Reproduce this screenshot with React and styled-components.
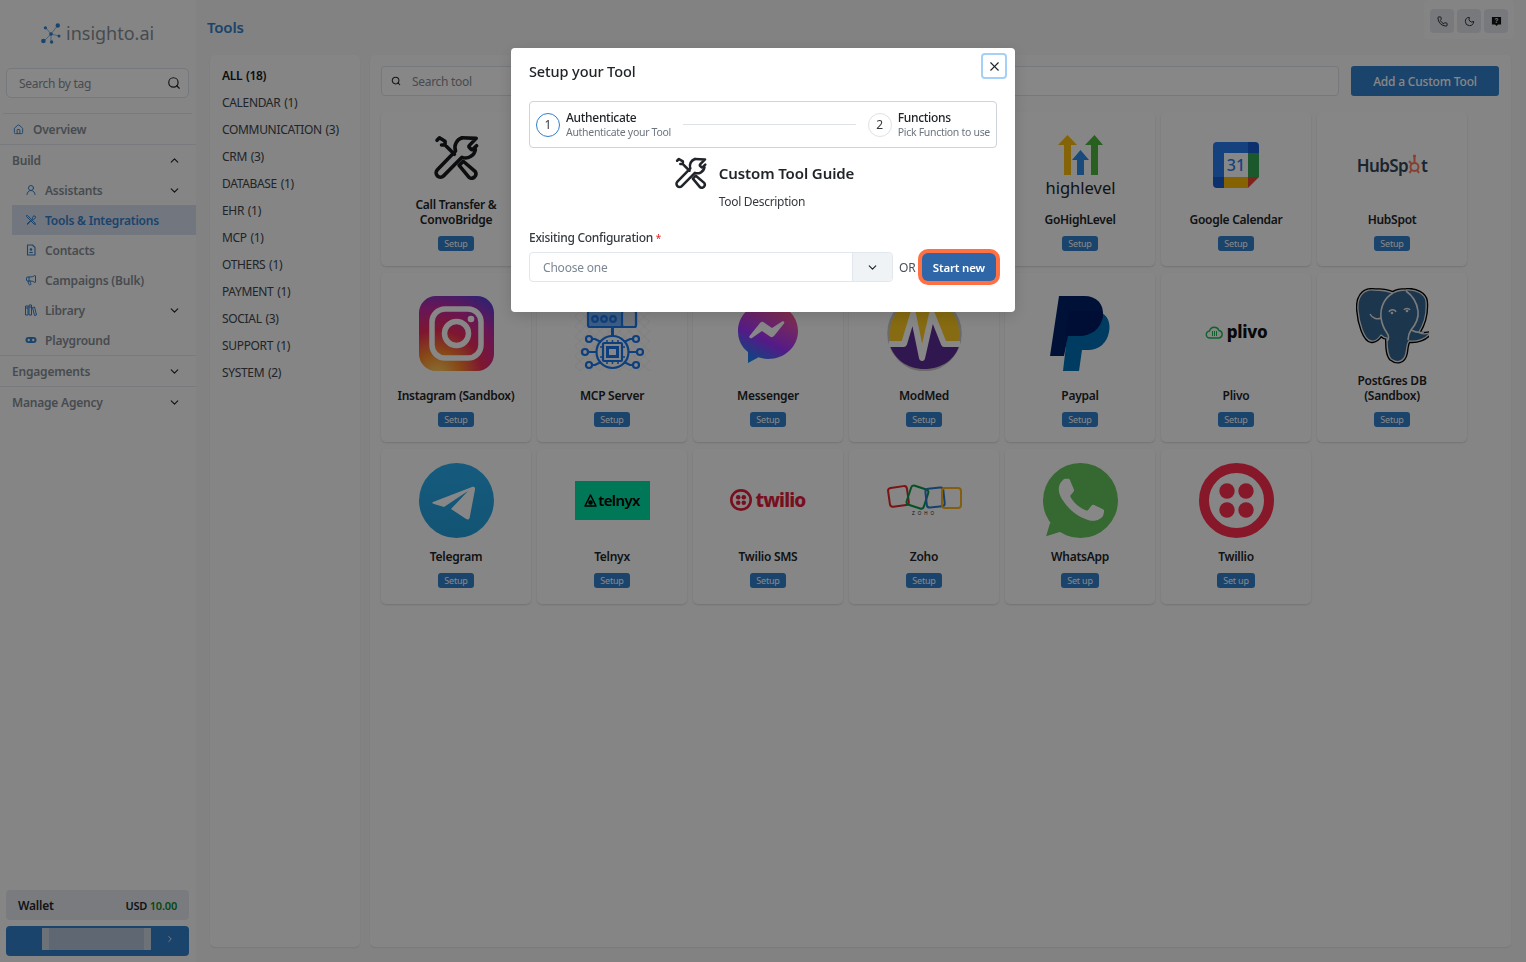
import React from "react"
import styled, { createGlobalStyle } from "styled-components"
import {
  ChevronDown,
  ChevronRight,
  ChevronUp,
  Home,
  Megaphone,
  Moon,
  Phone,
  Search,
  UserRound,
  X,
} from "lucide-react"

const FONT = `"Noto Sans", "Open Sans", sans-serif`
const BLUE = "#3380cc"

const GlobalStyle = createGlobalStyle`
  html, body {
    margin: 0;
    padding: 0;
    height: 100%;
    overflow: hidden;
    background: #f7f7f7;
    font-family: ${FONT};
  }
  * { box-sizing: border-box; }
`

const Page = styled.div`
  display: flex;
  height: 962px;
  width: 1526px;
  background: #f6f6f6;
`

// sidebar
const Sidebar = styled.aside`
  width: 196px;
  flex-shrink: 0;
  display: flex;
  flex-direction: column;
  background: #fcfcfc;
`
const LogoRow = styled.div`
  height: 68px;
  display: flex;
  align-items: center;
  gap: 4px;
  padding: 0 0 2px 41px;
`
const LogoText = styled.span`
  font-size: 18px;
  color: #868e96;
`
const TagSearch = styled.div`
  margin: 0 7px 15px 6px;
  height: 30px;
  border: 1px solid #dee2ed;
  border-radius: 5px;
  display: flex;
  align-items: center;
  justify-content: space-between;
  padding: 0 7px 0 12px;
  font-size: 12px;
  letter-spacing: -0.3px;
  color: #868e96;
  background: #fff;
  svg { color: #212529; }
`
const Rule = styled.div`
  height: 1px;
  background: #e3e7ef;
  margin: ${(p) => (p.$inset ? "0 4px 0 3px" : "0")};
`
const NavRow = styled.div`
  height: 30px;
  display: flex;
  align-items: center;
  gap: ${(p) => (p.$sub ? 8 : 9)}px;
  margin-left: ${(p) => (p.$sub ? 12 : 0)}px;
  padding: 0 15px 0 ${(p) => (p.$sub ? 13 : p.$icon ? 13 : 12)}px;
  font-size: 12px;
  font-weight: 600;
  letter-spacing: -0.2px;
  color: ${(p) => (p.$active ? BLUE : "#868e96")};
  background: ${(p) => (p.$active ? "#d5dff0" : "transparent")};
  svg.nav { color: ${BLUE}; flex-shrink: 0; }
  svg.chev { color: #212529; margin-left: auto; flex-shrink: 0; }
`
const SidebarFoot = styled.div`
  margin-top: auto;
  padding: 0 7px 6px 6px;
  display: flex;
  flex-direction: column;
  gap: 6px;
`
const Wallet = styled.div`
  height: 30px;
  border-radius: 4px;
  background: #e7e9ef;
  display: flex;
  align-items: center;
  justify-content: space-between;
  padding: 0 12px;
  font-size: 12px;
  font-weight: 600;
  letter-spacing: -0.2px;
  color: #212529;
`
const WalletAmount = styled.span`
  font-size: 11px;
  color: #212529;
  b { font-weight: 600; color: #0d8a1f; }
`
const AccountBar = styled.div`
  height: 30px;
  border-radius: 4px;
  background: ${BLUE};
  display: flex;
  align-items: center;
  padding: 2px 14px 6px 36px;
  color: #fff;
  svg { margin-left: auto; }
`
const AccountMask = styled.div`
  width: 109px;
  height: 22px;
  background: linear-gradient(90deg, #cfd8e4 0 7px, #b4c5d8 7px 102px, #cfd8e4 102px);
`

// main area
const Main = styled.main`
  flex: 1;
  min-width: 0;
  display: flex;
  flex-direction: column;
  padding: 0 15px 15px 11px;
`
const TopBar = styled.div`
  height: 55px;
  display: flex;
  justify-content: space-between;
  align-items: flex-start;
`
const PageTitle = styled.h1`
  margin: 17px 0 0;
  font-size: 15px;
  line-height: 20px;
  font-weight: 600;
  letter-spacing: -0.2px;
  color: ${BLUE};
`
const TopActions = styled.div`
  display: flex;
  gap: 3px;
  padding: 9px 6px 6px;
  margin: 0 -3px 0 0;
  border-radius: 4px;
  background: #f9f9f9;
  height: 39px;
`
const TopButton = styled.div`
  width: 24px;
  height: 24px;
  border-radius: 4px;
  background: #e3e5ea;
  display: flex;
  align-items: center;
  justify-content: center;
  color: #212529;
`
const Columns = styled.div`
  flex: 1;
  display: flex;
  gap: 10px;
  padding-left: 3px;
`
const Panel = styled.section`
  background: #fbfbfb;
  border-radius: 5px;
  box-shadow: 0 1px 2px rgba(0, 0, 0, 0.08);
`
const CategoryPanel = styled(Panel)`
  width: 150px;
  flex-shrink: 0;
  padding: 7px 0 0 12px;
`
const Category = styled.div`
  height: 27px;
  display: flex;
  align-items: center;
  font-size: 12px;
  letter-spacing: -0.33px;
  word-spacing: 1px;
  white-space: nowrap;
  font-weight: ${(p) => (p.$active ? 600 : 400)};
  color: ${(p) => (p.$active ? "#16191c" : "#40454b")};
`
const ToolPanel = styled(Panel)`
  flex: 1;
  min-width: 0;
  padding: 11px 12px 0 11px;
`
const SearchRow = styled.div`
  display: flex;
  gap: 12px;
  margin-bottom: 16px;
`
const ToolSearch = styled.div`
  flex: 1;
  height: 30px;
  background: #fff;
  border: 1px solid #dee2ed;
  border-radius: 4px;
  display: flex;
  align-items: center;
  gap: 11px;
  padding-left: 9px;
  font-size: 12px;
  letter-spacing: -0.3px;
  color: #868e96;
  svg { color: #212529; }
`
const AddButton = styled.button`
  width: 148px;
  height: 30px;
  border: 0;
  border-radius: 3px;
  background: ${BLUE};
  color: #fff;
  font: 500 12px ${FONT};
  letter-spacing: -0.2px;
`
const ToolGrid = styled.div`
  display: grid;
  grid-template-columns: repeat(7, 150px);
  grid-template-rows: 154px 169px 155px;
  column-gap: 6px;
  row-gap: 7px;
`
const Card = styled.article`
  display: flex;
  flex-direction: column;
  align-items: center;
  padding: 0 14px ${(p) => p.$bottom || 15}px;
  background: #fdfdfd;
  border-radius: 5px;
  box-shadow: 0 1px 2px rgba(0, 0, 0, 0.14);
`
const LogoBox = styled.div`
  flex: 1;
  display: flex;
  align-items: center;
  justify-content: center;
  padding-top: ${(p) => p.$top || 0}px;
  min-height: 0;
`
const ToolName = styled.div`
  margin-top: 3px;
  font-size: 12px;
  line-height: 15px;
  font-weight: 600;
  letter-spacing: -0.27px;
  text-align: center;
  color: #212529;
`
const SetupPill = styled.div`
  margin-top: 9px;
  height: 15px;
  padding: 0 6px;
  border-radius: 3px;
  background: ${BLUE};
  color: #fff;
  font-size: 9px;
  line-height: 15px;
  letter-spacing: -0.2px;
`

// word marks inside the logos
const WordMark = styled.span`
  display: inline-flex;
  align-items: center;
  gap: ${(p) => p.$gap || 0}px;
  font-size: ${(p) => p.$size}px;
  font-weight: ${(p) => p.$weight || 700};
  letter-spacing: ${(p) => p.$track || 0}px;
  color: ${(p) => p.$color};
  line-height: 1;
`
const TelnyxBadge = styled.div`
  width: 75px;
  height: 39px;
  background: #00e2a4;
  display: flex;
  align-items: center;
  justify-content: center;
`

// modal
const Overlay = styled.div`
  position: fixed;
  inset: 0;
  background: rgba(0, 0, 0, 0.47);
`
const Modal = styled.div`
  position: fixed;
  left: 511px;
  top: 48px;
  width: 504px;
  height: 264px;
  background: #fff;
  border-radius: 4px;
  padding: 0 18px;
  box-shadow: 0 4px 16px rgba(0, 0, 0, 0.15);
  display: flex;
  flex-direction: column;
`
const ModalHead = styled.div`
  height: 53px;
  display: flex;
  justify-content: space-between;
  align-items: flex-start;
`
const ModalTitle = styled.h2`
  margin: 13px 0 0;
  font-size: 14.5px;
  line-height: 20px;
  font-weight: 500;
  letter-spacing: -0.1px;
  color: #212529;
`
const CloseButton = styled.button`
  margin: 5px -10px 0 0;
  width: 26px;
  height: 26px;
  padding: 0;
  background: #fff;
  border: 2px solid #a5d0f8;
  border-radius: 4px;
  display: flex;
  align-items: center;
  justify-content: center;
  color: #212529;
`
const Stepper = styled.div`
  height: 47px;
  border: 1px solid #ced4da;
  border-radius: 4px;
  display: flex;
  align-items: center;
  padding: 0 6px;
`
const StepCircle = styled.div`
  width: 24px;
  height: 24px;
  border-radius: 50%;
  border: 1px solid ${(p) => (p.$current ? "#2f80d0" : "#dee2e6")};
  display: flex;
  align-items: center;
  justify-content: center;
  font-size: 12px;
  color: #343a40;
  flex-shrink: 0;
`
const StepText = styled.div`
  margin-left: 6px;
  padding-top: 1px;
  white-space: nowrap;
`
const StepTitle = styled.div`
  font-size: 12px;
  line-height: 15px;
  font-weight: 500;
  letter-spacing: -0.3px;
  color: #212529;
`
const StepHint = styled.div`
  font-size: 10.5px;
  line-height: 15px;
  letter-spacing: -0.3px;
  color: #6c757d;
`
const StepLine = styled.div`
  flex: 1;
  height: 1px;
  margin: 0 12px;
  background: #dee2e6;
`
const Guide = styled.div`
  display: grid;
  grid-template-columns: 32px auto;
  column-gap: 12px;
  justify-content: center;
  align-items: center;
  margin: 9px 0 0 3px;
`
const GuideTitle = styled.div`
  font-size: 15px;
  font-weight: 600;
  letter-spacing: -0.1px;
  color: #212529;
`
const GuideText = styled.div`
  grid-column: 2;
  margin-top: 3px;
  font-size: 12px;
  line-height: 20px;
  letter-spacing: -0.3px;
  color: #343a40;
`
const FieldLabel = styled.div`
  margin-top: 17px;
  font-size: 12px;
  line-height: 18px;
  font-weight: 500;
  letter-spacing: -0.3px;
  color: #343a40;
  span { font-size: 10px; color: #e03131; }
`
const FieldRow = styled.div`
  margin-top: 5px;
  display: flex;
  align-items: center;
`
const SelectBox = styled.div`
  width: 364px;
  height: 30px;
  border: 1px solid #e2e6ee;
  border-radius: 4px;
  display: flex;
  align-items: center;
  overflow: hidden;
  font-size: 12px;
  letter-spacing: -0.2px;
  color: #7b8794;
`
const SelectValue = styled.div`
  flex: 1;
  padding-left: 13px;
`
const SelectArrow = styled.div`
  width: 40px;
  height: 100%;
  background: #f0f3f6;
  border-left: 1px solid #e2e6ee;
  display: flex;
  align-items: center;
  justify-content: center;
  color: #212529;
`
const OrText = styled.span`
  margin-left: 6px;
  font-size: 12px;
  color: #495057;
`
const StartButton = styled.button`
  margin-left: 6px;
  width: 74px;
  height: 28px;
  border: 0;
  border-radius: 6px;
  background: #2f66a8;
  box-shadow: 0 0 0 4px #ff7043;
  color: #fff;
  font: 600 11.5px ${FONT};
  letter-spacing: -0.2px;
`

// drawings
const ToolsIcon = ({ size = 44, color = "#16191c", width = 1.9 }) => (
  <svg width={size} height={size} viewBox="0 0 24 24" fill="none" stroke={color} strokeWidth={width} strokeLinecap="round" strokeLinejoin="round">
    <path d="M15 1.500a5.400 5.400 0 0 0-3.500 7L1.800 18.500a2.300 2.300 0 0 0 3.300 3.300l9.800-9.900a5.400 5.400 0 0 0 7.200-4.200" />
    <path d="M15 1.500 22.500 1.800l-3.500 3.600a1 1 0 0 0 0 1.400l.6.6a1 1 0 0 0 1.400 0l1.700-1.700" />
    <path d="M1.600 2.800 2.900 1.500l3 1.800v2l5 5M5.900 5.300H4z" />
    <path d="M13.400 16.200l2.200-2.200 6.300 5.400a2.300 2.300 0 0 1-3.200 3.200z" />
  </svg>
)
const ContactDoc = () => (
  <svg className="nav" width="12" height="12" viewBox="0 0 24 24" fill="none" stroke="currentColor" strokeWidth="2.2">
    <path d="M5 2h10l5 5v15H5z" strokeLinejoin="round" />
    <circle cx="12" cy="11" r="1.600" fill="currentColor" />
    <path d="M8.500 17h7" />
  </svg>
)
const SmallTools = () => (
  <svg className="nav" width="12" height="12" viewBox="0 0 24 24" fill="none" stroke="currentColor" strokeWidth="2">
    <path d="M3 3h2l3 3 12 12 1 3-3-1L6 8 3 5zM20 4a4 4 0 0 0-5 5L4 20l1 1L15 10a4 4 0 0 0 5-6z" strokeLinejoin="round" />
  </svg>
)
const BookShelf = () => (
  <svg className="nav" width="12" height="12" viewBox="0 0 12 12" fill="none" stroke="currentColor" strokeWidth="1">
    <path d="M.500 2v9h2.500V2zM4 1v10h2.500V1zM7.500 3.500 9.500 3l2 8-2 .5z" />
    <path d="M.500 4h2.500M4 3h2.500" />
  </svg>
)
const PlayPill = () => (
  <svg className="nav" width="12" height="12" viewBox="0 0 24 24" fill="currentColor">
    <rect x="1" y="6" width="22" height="12" rx="6" />
    <circle cx="7.500" cy="12" r="2.400" fill="#fcfcfc" />
    <circle cx="16.500" cy="12" r="2.400" fill="#fcfcfc" />
  </svg>
)
const HelpIcon = () => (
  <svg width="11" height="11" viewBox="0 0 12 12">
    <path d="M1 1h10v8.400H7.600L6 11 4.400 9.400H1z" fill="#111" />
    <text x="6" y="7.600" fontSize="7" fontWeight="700" textAnchor="middle" fill="#e3e5ea" fontFamily="Liberation Sans">?</text>
  </svg>
)
const BrandMark = () => (
  <svg width="21" height="21" viewBox="0 0 21 21" fill={BLUE}>
    <g stroke={BLUE} strokeWidth="0.7" opacity="0.8">
      <path d="M5 5l5 6M17 2l-7 9M3 18l7-7M10 11l8 2M10 11l0 7" />
    </g>
    <circle cx="16.800" cy="2.500" r="2.200" />
    <circle cx="4.400" cy="4.800" r="1.600" />
    <circle cx="10" cy="11" r="1.800" />
    <circle cx="18" cy="13" r="1.500" />
    <circle cx="2.400" cy="18" r="2.300" />
    <circle cx="10.600" cy="19" r="1.700" />
  </svg>
)

const HighLevelLogo = () => (
  <svg width="75" height="70" viewBox="0 0 75 70">
    <path d="M15 15 24.500 5 34 15H28V45H21V15z" fill="#fbbc0e" />
    <path d="M42 15 51.500 5 60 15H55V45H48V15z" fill="#4cb83c" />
    <path d="M29 30 37.500 20 46 30H41V45H34V30z" fill="#2f8fe8" />
    <text x="37.500" y="64" fontSize="16.500" textAnchor="middle" fill="#212529" fontFamily="Noto Sans, sans-serif">highlevel</text>
  </svg>
)
const GoogleCalendarLogo = () => (
  <svg width="46" height="46" viewBox="0 0 46 46">
    <path d="M35 0H4a4 4 0 0 0-4 4v31h11V11h24z" fill="#2a7bf0" />
    <path d="M35 0h7a4 4 0 0 1 4 4v7H35z" fill="#1a5dd0" />
    <path d="M35 11h11v24H35z" fill="#34a853" />
    <path d="M35 35h11L35 46z" fill="#ea4335" />
    <path d="M11 35h24v11H11z" fill="#fbbc04" />
    <path d="M0 35h11v11H4a4 4 0 0 1-4-4z" fill="#1a5dd0" />
    <rect x="11" y="11" width="24" height="24" fill="#fff" />
    <text x="23" y="29" fontSize="16" fontWeight="500" textAnchor="middle" fill="#2a7bf0" fontFamily="Noto Sans, sans-serif">31</text>
  </svg>
)
const HubSpotLogo = () => (
  <WordMark $size={17} $weight={600} $color="#33475b" $track={-0.6}>
    HubSp
    <svg width="13" height="24" viewBox="0 0 13 24" fill="none" stroke="#ff7a59" strokeWidth="2">
      <circle cx="6.500" cy="14" r="4" />
      <path d="M6.500 10V4M3.500 11 1 8M9 17l2 3M3.500 17l-2 3" />
      <circle cx="6.500" cy="3" r="1.600" fill="#ff7a59" stroke="none" />
    </svg>
    t
  </WordMark>
)
const InstagramLogo = () => (
  <svg width="75" height="75" viewBox="0 0 75 75">
    <defs>
      <radialGradient id="ig" cx="0.25" cy="1.05" r="1.2">
        <stop offset="0" stopColor="#ffd666" />
        <stop offset="0.25" stopColor="#ff8a2a" />
        <stop offset="0.5" stopColor="#ee2a5c" />
        <stop offset="0.75" stopColor="#c32aa3" />
        <stop offset="1" stopColor="#5a3fd6" />
      </radialGradient>
    </defs>
    <rect width="75" height="75" rx="17" fill="url(#ig)" />
    <g fill="none" stroke="#fff" strokeWidth="5.500">
      <rect x="13" y="13" width="49" height="49" rx="13" />
      <circle cx="37.500" cy="37.500" r="12" />
    </g>
    <circle cx="52" cy="23" r="3.300" fill="#fff" />
  </svg>
)
const McpLogo = () => {
  const nodes = [[14, 43], [10, 56], [14, 69], [61, 43], [65, 56], [61, 69]]
  return (
    <svg width="75" height="75" viewBox="0 0 75 75" fill="none" stroke="#1a78f0" strokeWidth="2.200">
      <defs>
        <pattern id="hatch" width="7" height="7" patternUnits="userSpaceOnUse" patternTransform="rotate(45)">
          <path d="M0 0h7M0 0v7" stroke="#000" strokeOpacity="0.07" strokeWidth="1" />
        </pattern>
      </defs>
      <rect width="75" height="75" fill="url(#hatch)" stroke="none" />
      <rect x="13" y="15" width="48" height="16" rx="2" fill="#74b0f5" />
      <rect x="47" y="15" width="14" height="16" rx="2" fill="#d8dee6" />
      <circle cx="20" cy="23" r="2.800" />
      <circle cx="29" cy="23" r="2.800" />
      <circle cx="38" cy="23" r="2.800" />
      <path d="M37.500 31v9" strokeWidth="3" />
      <circle cx="37.500" cy="56" r="16" fill="#fdfdfd" />
      <rect x="28" y="47" width="19" height="18" rx="1" />
      <rect x="32.500" y="51.500" width="10" height="9" fill="#fff" strokeWidth="3" />
      <path d="M32 47v-3M37.500 47v-3M43 47v-3M32 65v3M37.500 65v3M43 65v3M28 51h-3M28 61h-3M47 51h3M47 61h3" strokeWidth="1.500" />
      <path d="M16 43h4l6 3M13 56h8M16 69h4l6-3M59 43h-4l-6 3M62 56h-8M59 69h-4l-6-3" />
      {nodes.map(([cx, cy]) => (
        <circle key={`${cx}-${cy}`} cx={cx} cy={cy} r="3" fill="#fdfdfd" />
      ))}
    </svg>
  )
}
const MessengerLogo = () => (
  <svg width="60" height="62" viewBox="0 0 60 62">
    <defs>
      <linearGradient id="msg" x1="0.2" y1="1" x2="0.7" y2="0">
        <stop offset="0" stopColor="#0a8cf0" />
        <stop offset="0.4" stopColor="#a033ff" />
        <stop offset="1" stopColor="#ff5c87" />
      </linearGradient>
    </defs>
    <path d="M30 1C13 1 0 13 0 29c0 9 3.600 16 10 21v11l10.500-5.800C23.500 56 26.500 57 30 57c17 0 30-12.500 30-28S47 1 30 1z" fill="url(#msg)" />
    <path d="M11.500 36 22 23c1.200-1.300 2.800-1.500 4-.5l8 5.500 10-6.500c1.500-1 3 .5 2 2L36 36c-1.200 1.300-2.800 1.500-4 .5L24 31l-10 7c-1.500 1-3.500-.5-2.500-2z" fill="#fff" transform="translate(0 -2)" />
  </svg>
)
const ModMedLogo = () => (
  <svg width="75" height="75" viewBox="0 0 75 75">
    <ellipse cx="37.500" cy="37.500" rx="36" ry="36.500" fill="#ffcb22" stroke="#c8c8c8" strokeWidth="2.500" />
    <path d="M2.500 48H17L25 24l9 38 10-40 12 26h16.500C69 63 55 73 37.500 73S7 63 2.500 48z" fill="#5e2d95" />
    <path d="M2 48h15L26 18l9 44 10-44 12 30h16" fill="none" stroke="#fff" strokeWidth="6" strokeLinejoin="round" />
  </svg>
)
const PaypalLogo = () => (
  <svg width="60" height="75" viewBox="0 0 60 75">
    <path d="M20 15h28c9 3 13 11 11 21-2 11-10 18-21 18h-6l-3 21H13z" fill="#0070ba" />
    <path d="M9 0h25c13 0 20 8 19 20-2 13-12 20-25 20H18l-4 20H0z" fill="#012169" />
    <path d="M19 15h31c3 1 3 2 3 5-2 13-12 20-25 20H15z" fill="#001c64" />
  </svg>
)
const PlivoLogo = () => (
  <WordMark $size={17} $weight={800} $color="#111" $gap={3} $track={-0.3}>
    <svg width="19" height="14" viewBox="0 0 19 14" fill="none" stroke="#1db954" strokeWidth="1.400">
      <path d="M5 13a3.500 3.500 0 0 1-.5-7A5 5 0 0 1 14 5.500a3.800 3.800 0 0 1 0 7.500z" />
      <path d="M7.500 6v5M9.500 6v5M11.500 6v5" strokeWidth="1" />
    </svg>
    plivo
  </WordMark>
)
const PG_OUTLINE = "M18 2C6 1 1 10 2 22c1 13 6 30 13 31 5 1 8-3 10-6 2 2 4 3 6 3 0 8 0 17 4 21 5 4 13 4 15-6 1-6 1-10 3-12 8 1 17-2 21-8-5 1-10 1-11-1 5-8 8-20 7-31C69 6 60 1 50 2c-6 0-10 1-13 3-5-2-12-3-19-3z"
const PostgresLogo = () => (
  <svg width="73" height="76" viewBox="0 0 73 76" fill="none">
    <path d={PG_OUTLINE} stroke="#000" strokeWidth="4" strokeLinejoin="round" />
    <path d={PG_OUTLINE} fill="#336791" stroke="#e8e8e8" strokeWidth="1.300" strokeLinejoin="round" />
    <path d="M37 5c-9 5-13 15-12 25 1 6 3 11 6 15 2 3 2 6 0 8M50 3c7 5 11 12 12 20 1 7-2 13-7 19-2 3-3 6-3 10" stroke="#e8e8e8" strokeWidth="1.600" />
    <path d="M25 30c-4 2-9 0-11-4M55 42c4 2 9 3 13 2M33 24c1-3 6-3 7 0M48 22c1-2 5-2 6 0" stroke="#e8e8e8" strokeWidth="1.400" />
    <circle cx="36" cy="25" r="1.300" fill="#e8e8e8" />
    <circle cx="51" cy="23" r="1.300" fill="#e8e8e8" />
  </svg>
)
const TelegramLogo = () => (
  <svg width="75" height="75" viewBox="0 0 75 75">
    <defs>
      <linearGradient id="tg" x1="0.5" y1="0" x2="0.5" y2="1">
        <stop offset="0" stopColor="#2aabee" />
        <stop offset="1" stopColor="#229ed9" />
      </linearGradient>
    </defs>
    <circle cx="37.500" cy="37.500" r="37.500" fill="url(#tg)" />
    <path d="M14 39 53 24c2-.8 3.500.4 3 2.500l-5.300 28c-.4 2-2 2.600-3.500 1.600L32 46l17-18-24 16-10-3c-2-.6-2-1.500-1-2z" fill="#fff" />
  </svg>
)
const TelnyxLogo = () => (
  <TelnyxBadge>
    <WordMark $size={15} $weight={600} $color="#000" $gap={1} $track={-0.6}>
      <svg width="13" height="13" viewBox="0 0 13 13" fill="none" stroke="#000" strokeWidth="1.500">
        <path d="M6.500 1 1 12h11z" strokeLinejoin="round" />
        <circle cx="6.500" cy="8.500" r="1.500" fill="#000" />
      </svg>
      telnyx
    </WordMark>
  </TelnyxBadge>
)
const TwilioDots = ({ size, color, ring }) => (
  <svg width={size} height={size} viewBox="0 0 75 75" fill={color}>
    <circle cx="37.500" cy="37.500" r={37.5 - ring / 2} fill="none" stroke={color} strokeWidth={ring} />
    <circle cx="28" cy="28" r="7.700" />
    <circle cx="47" cy="28" r="7.700" />
    <circle cx="28" cy="47" r="7.700" />
    <circle cx="47" cy="47" r="7.700" />
  </svg>
)
const TwilioSmsLogo = () => (
  <WordMark $size={19} $weight={800} $color="#e31e3c" $gap={3} $track={-0.8}>
    <TwilioDots size={22} color="#e31e3c" ring={9} />
    twilio
  </WordMark>
)
const ZohoLogo = () => (
  <svg width="75" height="32" viewBox="0 0 75 32" fill="none" strokeWidth="2">
    <rect x="2" y="3" width="19" height="19" rx="3" stroke="#e42527" transform="rotate(-8 11 13)" />
    <rect x="21.500" y="3" width="18" height="20" rx="3" stroke="#089949" transform="rotate(18 30 13)" />
    <rect x="39" y="4" width="18" height="19" rx="3" stroke="#2a7bd0" transform="rotate(-6 48 13)" />
    <rect x="55" y="4" width="19" height="20" rx="3" stroke="#f9b21d" />
    <text x="37.500" y="31" fontSize="4.500" letterSpacing="3" textAnchor="middle" fill="#222" stroke="none" fontFamily="Liberation Sans">ZOHO</text>
  </svg>
)
const WhatsAppLogo = () => (
  <svg width="75" height="75" viewBox="0 0 24 24">
    <circle cx="12" cy="12" r="12" fill="#67c45e" />
    <path d="M2.300 19 1 23.400 5.600 22z" fill="#67c45e" />
    <path transform="translate(12 12) scale(1.200) translate(-11.800 -12.200)" d="M17.472 14.382c-.297-.149-1.758-.867-2.030-.967-.273-.099-.471-.148-.670.150-.197.297-.767.966-.940 1.164-.173.199-.347.223-.644.075-.297-.150-1.255-.463-2.390-1.475-.883-.788-1.480-1.761-1.653-2.059-.173-.297-.018-.458.130-.606.134-.133.298-.347.446-.520.149-.174.198-.298.298-.497.099-.198.050-.371-.025-.520-.075-.149-.669-1.612-.916-2.207-.242-.579-.487-.500-.669-.510-.173-.008-.371-.010-.570-.010-.198 0-.520.074-.792.372-.272.297-1.040 1.016-1.040 2.479 0 1.462 1.065 2.875 1.213 3.074.149.198 2.096 3.200 5.077 4.487.709.306 1.262.489 1.694.625.712.227 1.360.195 1.871.118.571-.085 1.758-.719 2.006-1.413.248-.694.248-1.289.173-1.413-.074-.124-.272-.198-.570-.347z" fill="#fff" />
  </svg>
)

const ROW_TOP = [8, 8, 5]

const TOOLS = [
  { name: "Call Transfer & ConvoBridge", logo: <ToolsIcon size={45} /> },
  { empty: true },
  { empty: true },
  { empty: true },
  { name: "GoHighLevel", logo: <HighLevelLogo />, top: 9 },
  { name: "Google Calendar", logo: <GoogleCalendarLogo />, top: 9 },
  { name: "HubSpot", logo: <HubSpotLogo />, top: 9 },
  { name: "Instagram (Sandbox)", logo: <InstagramLogo /> },
  { name: "MCP Server", logo: <McpLogo /> },
  { name: "Messenger", logo: <MessengerLogo /> },
  { name: "ModMed", logo: <ModMedLogo /> },
  { name: "Paypal", logo: <PaypalLogo /> },
  { name: "Plivo", logo: <PlivoLogo />, top: 5 },
  { name: "PostGres DB (Sandbox)", logo: <PostgresLogo /> },
  { name: "Telegram", logo: <TelegramLogo /> },
  { name: "Telnyx", logo: <TelnyxLogo /> },
  { name: "Twilio SMS", logo: <TwilioSmsLogo /> },
  { name: "Zoho", logo: <ZohoLogo /> },
  { name: "WhatsApp", logo: <WhatsAppLogo />, action: "Set up" },
  { name: "Twillio", logo: <TwilioDots size={75} color="#fd2f4f" ring={10} />, action: "Set up" },
]

const CATEGORIES = [
  "ALL (18)", "CALENDAR (1)", "COMMUNICATION (3)", "CRM (3)", "DATABASE (1)", "EHR (1)",
  "MCP (1)", "OTHERS (1)", "PAYMENT (1)", "SOCIAL (3)", "SUPPORT (1)", "SYSTEM (2)",
]

const Chevron = ({ up }) => {
  const Icon = up ? ChevronUp : ChevronDown
  return <Icon className="chev" size={13} strokeWidth={2.2} />
}

export default function App() {
  return (
    <>
      <GlobalStyle />
      <Page>
        <Sidebar>
          <LogoRow>
            <BrandMark />
            <LogoText>insighto.ai</LogoText>
          </LogoRow>
          <TagSearch>
            Search by tag
            <Search size={14} strokeWidth={2} />
          </TagSearch>
          <Rule $inset />
          <NavRow $icon><Home className="nav" size={11} />Overview</NavRow>
          <Rule />
          <NavRow>Build<Chevron up /></NavRow>
          <NavRow $sub><UserRound className="nav" size={12} />Assistants<Chevron /></NavRow>
          <NavRow $sub $active><SmallTools />Tools &amp; Integrations</NavRow>
          <NavRow $sub><ContactDoc />Contacts</NavRow>
          <NavRow $sub><Megaphone className="nav" size={12} />Campaigns (Bulk)</NavRow>
          <NavRow $sub><BookShelf />Library<Chevron /></NavRow>
          <NavRow $sub><PlayPill />Playground</NavRow>
          <Rule />
          <NavRow>Engagements<Chevron /></NavRow>
          <Rule />
          <NavRow>Manage Agency<Chevron /></NavRow>
          <SidebarFoot>
            <Wallet>
              Wallet
              <WalletAmount>USD <b>10.00</b></WalletAmount>
            </Wallet>
            <AccountBar>
              <AccountMask />
              <ChevronRight size={10} />
            </AccountBar>
          </SidebarFoot>
        </Sidebar>

        <Main>
          <TopBar>
            <PageTitle>Tools</PageTitle>
            <TopActions>
              <TopButton><Phone size={11} /></TopButton>
              <TopButton><Moon size={11} /></TopButton>
              <TopButton><HelpIcon /></TopButton>
            </TopActions>
          </TopBar>
          <Columns>
            <CategoryPanel>
              {CATEGORIES.map((c, i) => (
                <Category key={c} $active={i === 0}>{c}</Category>
              ))}
            </CategoryPanel>
            <ToolPanel>
              <SearchRow>
                <ToolSearch>
                  <Search size={10} strokeWidth={2.5} />
                  Search tool
                </ToolSearch>
                <AddButton>Add a Custom Tool</AddButton>
              </SearchRow>
              <ToolGrid>
                {TOOLS.map((t, i) =>
                  t.empty ? (
                    <Card key={i} />
                  ) : (
                    <Card key={t.name} $bottom={i >= 14 ? 16 : 15}>
                      <LogoBox $top={t.top ?? ROW_TOP[Math.floor(i / 7)]}>{t.logo}</LogoBox>
                      <ToolName>{t.name}</ToolName>
                      <SetupPill>{t.action || "Setup"}</SetupPill>
                    </Card>
                  )
                )}
              </ToolGrid>
            </ToolPanel>
          </Columns>
        </Main>
      </Page>

      <Overlay />
      <Modal>
        <ModalHead>
          <ModalTitle>Setup your Tool</ModalTitle>
          <CloseButton><X size={15} strokeWidth={1.8} /></CloseButton>
        </ModalHead>
        <Stepper>
          <StepCircle $current>1</StepCircle>
          <StepText>
            <StepTitle>Authenticate</StepTitle>
            <StepHint>Authenticate your Tool</StepHint>
          </StepText>
          <StepLine />
          <StepCircle>2</StepCircle>
          <StepText>
            <StepTitle>Functions</StepTitle>
            <StepHint>Pick Function to use</StepHint>
          </StepText>
        </Stepper>
        <Guide>
          <ToolsIcon size={32} color="#212529" width={1.9} />
          <GuideTitle>Custom Tool Guide</GuideTitle>
          <GuideText>Tool Description</GuideText>
        </Guide>
        <FieldLabel>Exisiting Configuration <span>*</span></FieldLabel>
        <FieldRow>
          <SelectBox>
            <SelectValue>Choose one</SelectValue>
            <SelectArrow><ChevronDown size={13} strokeWidth={2.2} /></SelectArrow>
          </SelectBox>
          <OrText>OR</OrText>
          <StartButton>Start new</StartButton>
        </FieldRow>
      </Modal>
    </>
  )
}
